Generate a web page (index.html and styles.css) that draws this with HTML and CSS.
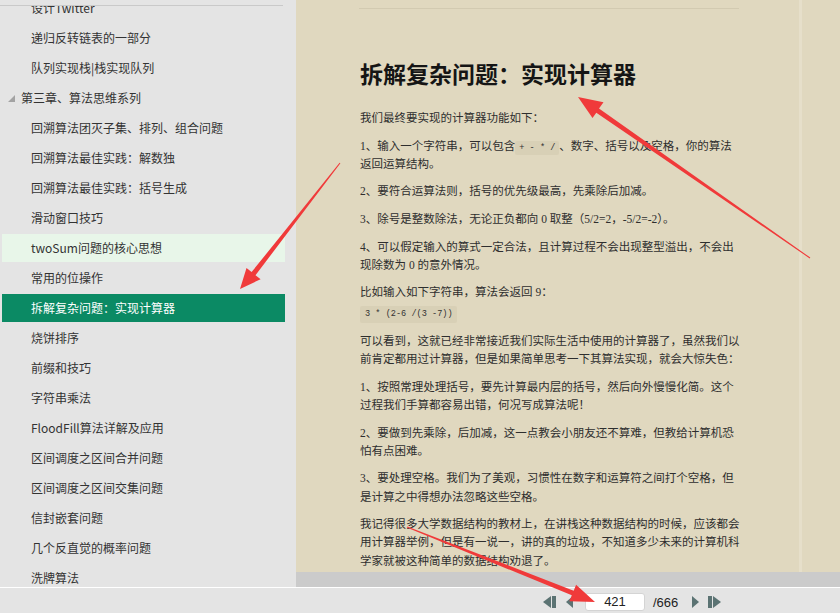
FILE: index.html
```html
<!DOCTYPE html>
<html lang="zh-CN">
<head>
<meta charset="utf-8">
<title>拆解复杂问题：实现计算器</title>
<link rel="stylesheet" href="styles.css">
</head>
<body>
<div class="app">
  <aside class="sidebar">
    <div class="side-top"></div>
    <div class="toc">
      <ul class="toc-list">
        <li class="item">设计Twitter</li>
        <li class="item">递归反转链表的一部分</li>
        <li class="item">队列实现栈|栈实现队列</li>
        <li class="item chapter"><svg class="tri" width="7" height="7" viewBox="0 0 7 7"><polygon points="7,0 7,7 0,7"/></svg>第三章、算法思维系列</li>
        <li class="item">回溯算法团灭子集、排列、组合问题</li>
        <li class="item">回溯算法最佳实践：解数独</li>
        <li class="item">回溯算法最佳实践：括号生成</li>
        <li class="item">滑动窗口技巧</li>
        <li class="item hover">twoSum问题的核心思想</li>
        <li class="item">常用的位操作</li>
        <li class="item active">拆解复杂问题：实现计算器</li>
        <li class="item">烧饼排序</li>
        <li class="item">前缀和技巧</li>
        <li class="item">字符串乘法</li>
        <li class="item">FloodFill算法详解及应用</li>
        <li class="item">区间调度之区间合并问题</li>
        <li class="item">区间调度之区间交集问题</li>
        <li class="item">信封嵌套问题</li>
        <li class="item">几个反直觉的概率问题</li>
        <li class="item">洗牌算法</li>
      </ul>
    </div>
  </aside>

  <main class="reader">
    <div class="viewport">
      <article class="page">
        <hr class="sep">
        <h1 class="title">拆解复杂问题：实现计算器</h1>
        <p>我们最终要实现的计算器功能如下：</p>
        <p><span class="n">1</span>、输入一个字符串，可以包含<code class="code">+ - * /</code>、数字、括号以及空格，你的算法返回运算结构。</p>
        <p><span class="n">2</span>、要符合运算法则，括号的优先级最高，先乘除后加减。</p>
        <p><span class="n">3</span>、除号是整数除法，无论正负都向<span class="n"> 0 </span>取整（<span class="n">5/2=2</span>，<span class="n">-5/2=-2</span>）。</p>
        <p><span class="n">4</span>、可以假定输入的算式一定合法，且计算过程不会出现整型溢出，不会出现除数为<span class="n"> 0 </span>的意外情况。</p>
        <p>比如输入如下字符串，算法会返回<span class="n"> 9</span>：</p>
        <pre class="block">3 * (2-6 /(3 -7))</pre>
        <p>可以看到，这就已经非常接近我们实际生活中使用的计算器了，虽然我们以前肯定都用过计算器，但是如果简单思考一下其算法实现，就会大惊失色：</p>
        <p><span class="n">1</span>、按照常理处理括号，要先计算最内层的括号，然后向外慢慢化简。这个过程我们手算都容易出错，何况写成算法呢！</p>
        <p><span class="n">2</span>、要做到先乘除，后加减，这一点教会小朋友还不算难，但教给计算机恐怕有点困难。</p>
        <p><span class="n">3</span>、要处理空格。我们为了美观，习惯性在数字和运算符之间打个空格，但是计算之中得想办法忽略这些空格。</p>
        <p>我记得很多大学数据结构的教材上，在讲栈这种数据结构的时候，应该都会用计算器举例，但是有一说一，讲的真的垃圾，不知道多少未来的计算机科学家就被这种简单的数据结构劝退了。</p>
      </article>
      <div class="vline"></div>
    </div>
    <div class="hscroll"></div>
  </main>

  <footer class="pager">
    <svg class="nav first" width="13" height="12" viewBox="0 0 13 12"><polygon points="0,6 8,0 8,12"/><rect x="9" y="0" width="4" height="12"/></svg>
    <svg class="nav prev" width="7" height="12" viewBox="0 0 7 12"><polygon points="0,6 7,0 7,12"/></svg>
    <div class="page-input">421</div>
    <span class="total">/666</span>
    <svg class="nav next" width="7" height="12" viewBox="0 0 7 12"><polygon points="7,6 0,0 0,12"/></svg>
    <svg class="nav last" width="13" height="12" viewBox="0 0 13 12"><rect x="0" y="0" width="4" height="12"/><polygon points="13,6 5,0 5,12"/></svg>
  </footer>

  <svg class="annot" width="840" height="613" viewBox="0 0 840 613">
    <polygon points="340.4,163.3 255.5,275.2 260.6,279.2 240,289 246.5,268.1 251.6,272.1 339.6,162.7"/>
    <polygon points="810.3,257.6 599,108.6 603.5,102.2 578,97 592.5,117.9 596.3,112.7 809.7,258.4"/>
    <polygon points="406.8,527.6 571.8,595.3 569.4,601.3 595,602 576.1,584.7 573.7,590.7 407.2,526.4"/>
  </svg>
</div>
</body>
</html>
```

FILE: styles.css
```css
* {
  box-sizing: border-box;
}

html, body {
  margin: 0;
  padding: 0;
}

body {
  width: 840px;
  height: 613px;
  overflow: hidden;
  font-family: "Noto Sans CJK SC", "Noto Sans", sans-serif;
  background: #e4e4e4;
}

.app {
  position: relative;
  display: grid;
  grid-template-columns: 296px 544px;
  grid-template-rows: 587px 26px;
  width: 840px;
  height: 613px;
}

/* ---------- sidebar ---------- */
.sidebar {
  background: #e4e4e4;
  overflow: hidden;
  display: flex;
  flex-direction: column;
}

.side-top {
  height: 6px;
  width: 283px;
  border-bottom: 1px solid #c9c9c9;
  flex: none;
}

.toc {
  flex: 1;
  overflow: hidden;
}

.toc-list {
  list-style: none;
  margin: -13px 0 0 0;
  padding: 0;
}

.item {
  height: 30px;
  line-height: 28px;
  border-top: 1px solid transparent;
  border-bottom: 1px solid transparent;
  background-clip: padding-box;
  margin-left: 2px;
  width: 283px;
  padding-left: 29px;
  font-size: 12px;
  color: #333;
  white-space: nowrap;
}

.item.chapter {
  padding-left: 6px;
  display: flex;
  align-items: center;
}

.tri {
  fill: #a3a3a3;
  margin-right: 6px;
  flex: none;
}

.item.hover {
  background-color: #e8f6e9;
}

.item.active {
  background-color: #0b8a64;
  color: #ffffff;
}

/* ---------- reader ---------- */
.reader {
  background: #e0d8bf;
  display: grid;
  grid-template-rows: 572px 15px;
  overflow: hidden;
}

.viewport {
  display: flex;
  overflow: hidden;
}

.page {
  width: 503px;
  flex: none;
  padding-left: 64px;
  color: #2e2e2e;
  font-family: "Noto Sans CJK SC", sans-serif;
}

.sep {
  margin: 8px 0 0 -1px;
  width: 380px;
  height: 0;
  border: 0;
  border-top: 1px solid #d2cab1;
}

.title {
  margin: 51px 0 16px 0;
  font-family: "Liberation Serif", "Noto Sans CJK SC", serif;
  font-size: 23px;
  line-height: 32px;
  font-weight: bold;
  color: #151515;
  white-space: nowrap;
}

.page p {
  width: 381px;
  margin: 0 0 9.4px 0;
  font-size: 11.5px;
  line-height: 18.2px;
}

.n {
  font-family: "Liberation Serif", serif;
  line-height: 1;
}

.code {
  font-family: "Liberation Mono", monospace;
  font-size: 8.6px;
  line-height: 1;
  background: #d8d0b6;
  padding: 2px 4px;
  border-radius: 2px;
}

.block {
  width: fit-content;
  margin: -4px 0 8px 0;
  padding: 3px 4px 3px 5px;
  font-family: "Liberation Mono", monospace;
  font-size: 8.6px;
  line-height: 11px;
  background: #d8d0b6;
  border-radius: 2px;
  color: #333;
}

.vline {
  width: 3px;
  flex: none;
  background: #e6dfca;
}

.hscroll {
  background: #cbcbcb;
}

/* ---------- footer pager ---------- */
.pager {
  grid-column: 1 / -1;
  background: #e4e4e4;
  border-top: 1px solid #ffffff;
  display: flex;
  align-items: center;
  padding: 3px 0 0 543px;
  font-family: "Liberation Sans", sans-serif;
  font-size: 13px;
  color: #222;
}

.nav {
  fill: #5b7373;
  flex: none;
}

.prev {
  margin-left: 10px;
}

.page-input {
  margin-left: 12px;
  width: 60px;
  height: 18px;
  line-height: 16px;
  background: #ffffff;
  border: 1px solid #d4d4d4;
  border-radius: 3px;
  text-align: center;
}

.total {
  margin-left: 8px;
}

.next {
  margin-left: 14px;
}

.last {
  margin-left: 9px;
}

/* ---------- annotation overlay ---------- */
.annot {
  position: absolute;
  left: 0;
  top: 0;
  pointer-events: none;
  fill: #f03a3a;
}
```
